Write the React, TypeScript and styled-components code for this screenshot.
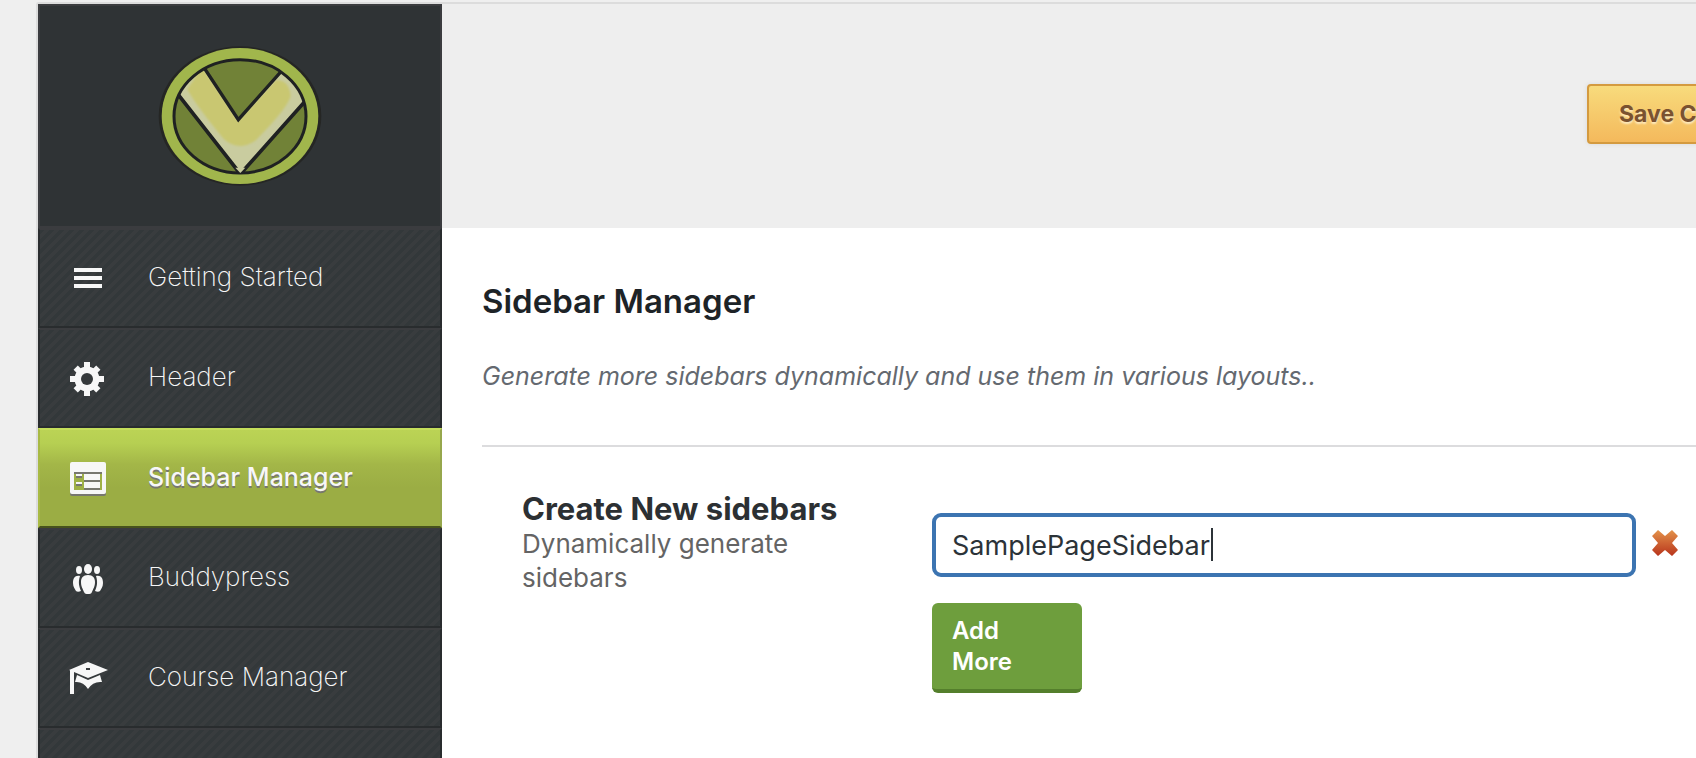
import React, { useState } from "react";
import styled, { createGlobalStyle, css } from "styled-components";

const GlobalStyle = createGlobalStyle`
  * { box-sizing: border-box; }
  body {
    margin: 0;
    background: #efefef;
    font-family: Inter, "Liberation Sans", sans-serif;
    color: #3c434a;
    overflow-x: hidden;
  }
`;

const stripes = css`
  background-color: #373b3d;
  background-image: linear-gradient(
    135deg,
    #33383a 25%,
    #393c3e 25%,
    #393c3e 50%,
    #33383a 50%,
    #33383a 75%,
    #393c3e 75%
  );
  background-size: 10px 10px;
`;

const Page = styled.div`
  min-height: 100vh;
  padding: 2px 0 0 36px;
  display: flex;
`;

const Panel = styled.div`
  flex: 1;
  min-width: 0;
  display: flex;
  border: solid #dcdcdc;
  border-width: 2px 0 0 2px;
  border-top-left-radius: 3px;
`;

const Sidebar = styled.aside`
  flex: 0 0 404px;
  display: flex;
  flex-direction: column;
  background: #2f3335;
`;

const LogoBox = styled.div`
  height: 224px;
  display: flex;
  align-items: center;
  justify-content: center;
  border: 2px solid #3b3c3f;
`;

const Nav = styled.nav`
  flex: 1;
  display: flex;
  flex-direction: column;
`;

const NavLink = styled.a<{ $active?: boolean }>`
  height: 100px;
  display: flex;
  align-items: center;
  gap: 40px;
  padding: 0 28px;
  border: solid #292c2e;
  border-width: 2px;
  border-top-color: #3b3c3f;
  color: #f7f7f7;
  font-size: 26px;
  font-weight: 200;
  line-height: 32px;
  text-decoration: none;
  ${stripes}
  ${(p) =>
    p.$active &&
    css`
      border-color: #c5de5b #96a74c #48531c #a8b944;
      background: linear-gradient(#bbd355, #b6cf52 14%, #a3b648 36%, #9bad44 60%, #9bad44);
      font-size: 25px;
      font-weight: 500;
      text-shadow: 0 2px 0 #77776f;
    `}
`;

const NavLabel = styled.span`
  padding-bottom: 2px;
`;

const NavRest = styled.div`
  flex: 1;
  border: solid #292c2e;
  border-width: 2px 2px 0;
  border-top-color: #3b3c3f;
  ${stripes}
`;

const NavIcon = styled.svg`
  width: 40px;
  height: 40px;
  flex: none;
  fill: #f7f7f7;
`;

const Main = styled.main`
  flex: 1;
  min-width: 0;
  background: #fff;
`;

const TopBar = styled.header`
  height: 224px;
  background: #eee;
  display: flex;
  justify-content: flex-end;
  padding-top: 80px;
  overflow: hidden;
`;

const SaveSlot = styled.div`
  flex: 0 0 109px;
  min-width: 0;
`;

const SaveButton = styled.button`
  height: 60px;
  padding: 0 30px;
  border: 2px solid #d49a3f;
  border-radius: 4px;
  background: linear-gradient(#f8db7c, #f4b95c);
  box-shadow: 0 0 4px #d8d8d8;
  color: #7a5230;
  font: 700 23px/28px Inter, "Liberation Sans", sans-serif;
  text-shadow: 0 2px 2px #fdeac0;
  white-space: nowrap;
`;

const Intro = styled.section`
  margin-left: 40px;
  padding: 52px 0 51px;
  border-bottom: 2px solid #dcdcde;
`;

const Title = styled.h1`
  margin: 0 0 36px;
  color: #1d2327;
  font-size: 33px;
  font-weight: 600;
  line-height: 42px;
`;

const Lead = styled.p`
  margin: 0;
  color: #646970;
  font-size: 25px;
  font-style: italic;
  line-height: 36px;
`;

const Option = styled.section`
  display: grid;
  grid-template-columns: 300px 1fr;
  column-gap: 110px;
  padding: 43px 18px 40px 80px;
`;

const OptionTitle = styled.label`
  display: block;
  color: #2c3033;
  font-size: 31px;
  font-weight: 700;
  line-height: 37px;
  white-space: nowrap;
`;

const OptionHint = styled.p`
  margin: 0;
  color: #646464;
  font-size: 26px;
  line-height: 34px;
`;

const Fields = styled.div`
  padding-top: 23px;
`;

const FieldRow = styled.div`
  display: flex;
  align-items: center;
  gap: 16px;
  margin-bottom: 26px;
`;

const InputWrap = styled.div`
  flex: 1;
  position: relative;
`;

const TextInput = styled.input`
  display: block;
  width: 100%;
  height: 64px;
  padding: 0 16px;
  border: 4px solid #3c74b1;
  border-radius: 9px;
  outline: none;
  background: #fff;
  color: #2c3338;
  font: 400 27px/32px Inter, "Liberation Sans", sans-serif;
`;

const Caret = styled.span`
  position: absolute;
  top: 15px;
  left: 279px;
  width: 2px;
  height: 33px;
  background: #2c3338;
`;

const RemoveButton = styled.button`
  width: 26px;
  height: 30px;
  padding: 0 0 4px;
  border: 0;
  background: none;

  svg {
    display: block;
  }
`;

const AddButton = styled.button`
  width: 150px;
  padding: 12px 60px 12px 20px;
  border: 0;
  border-bottom: 4px solid #547f2c;
  border-radius: 6px;
  background: #6e9e3d;
  color: #fff;
  font: 600 24px/31px Inter, "Liberation Sans", sans-serif;
  text-align: left;
`;

const Logo = () => (
  <svg width="168" height="144" viewBox="468 132 504 432" role="img" aria-label="Logo">
    <defs>
      <clipPath id="disc">
        <ellipse cx="720" cy="349" rx="198" ry="171" />
      </clipPath>
      <filter id="soft">
        <feGaussianBlur stdDeviation="3" />
      </filter>
    </defs>
    <ellipse cx="720" cy="348" rx="244" ry="209" fill="#252624" />
    <ellipse cx="720" cy="348" rx="235" ry="204" fill="#a1b64c" />
    <ellipse cx="720" cy="349" rx="196" ry="169" fill="#718237" />
    <g clipPath="url(#disc)">
      <path d="M510 250L595 177L715 362L875 182L940 274L721 520Z" fill="#c9cc9f" />
      <path
        d="M562 268L606 200L715 362L828 240Q868 240 872 288Q862 326 766 422Q715 456 672 418Q590 320 562 268Z"
        fill="#c9c771"
        filter="url(#soft)"
      />
      <path d="M595 177L715 359L875 179" fill="none" stroke="#1f2122" strokeWidth="10" />
      <path d="M508 250L721 522L942 274" fill="none" stroke="#1f2122" strokeWidth="11" />
    </g>
    <ellipse cx="720" cy="349" rx="198" ry="170" fill="none" stroke="#1f2122" strokeWidth="9" />
    <path d="M706 503L721 519L736 503Z" fill="#c9cc9f" />
  </svg>
);

const icons = {
  bars: <path d="M6 10h28v4H6zM6 18h28v4H6zM6 26h28v4H6z" />,
  gear: (
    <g transform="translate(19 21)">
      {[0, 45, 90, 135].map((a) => (
        <rect key={a} x="-3" y={a % 90 ? -16 : -17} width="6" height={a % 90 ? 32 : 34} transform={`rotate(${a})`} />
      ))}
      <circle r="9" fill="none" stroke="#f7f7f7" strokeWidth="7" />
      <circle r="6" fill="#35393b" />
    </g>
  ),
  layout: (
    <>
      <rect x="2" y="6" width="36" height="32" rx="2" fill="#77776f" />
      <rect x="2" y="4" width="36" height="32" rx="2" />
      <path d="M6 14h28v18H6z" fill="#9fb146" />
      <path d="M6 14h28v2H6zM8 18h6v2H8zM8 26h6v2H8zM16 22h16v2H16zM16 30h16v2H16z" fill="#77776f" />
      <path d="M8 16h6v2H8zM8 24h6v2H8zM16 16h16v6H16zM16 24h16v6H16z" />
    </>
  ),
  group: (
    <>
      <ellipse cx="20" cy="11" rx="4" ry="5" />
      <ellipse cx="11" cy="12" rx="3" ry="4" />
      <ellipse cx="29" cy="12" rx="3" ry="4" />
      <path d="M20 17c5 0 7 3 7 7 0 5-2 7-3 10-1 2-2 2-4 2s-3 0-4-2c-1-3-3-5-3-10 0-4 2-7 7-7z" />
      <path d="M12 18c-5-1-7 2-7 7 0 4 2 6 3 8 1 1 3 1 5 0-2-5-3-9-1-15zM28 18c5-1 7 2 7 7 0 4-2 6-3 8-1 1-3 1-5 0 2-5 3-9 1-15z" />
    </>
  ),
  cap: (
    <>
      <path fillRule="evenodd" d="M20 4L40 12L20 20L6 14L1 12ZM18 10v2h4v-2z" />
      <path d="M2 12h4v24H2zM9 17L20 22L32 17L34 24Q25 23 20 31Q15 23 7 24Z" />
    </>
  ),
};

const items: { icon: keyof typeof icons; label: string; active?: boolean }[] = [
  { icon: "bars", label: "Getting Started" },
  { icon: "gear", label: "Header" },
  { icon: "layout", label: "Sidebar Manager", active: true },
  { icon: "group", label: "Buddypress" },
  { icon: "cap", label: "Course Manager" },
];

export default function App() {
  const [name, setName] = useState("SamplePageSidebar");
  return (
    <Page>
      <GlobalStyle />
      <Panel>
        <Sidebar>
          <LogoBox>
            <Logo />
          </LogoBox>
          <Nav>
            {items.map((item) => (
              <NavLink key={item.label} href="#" $active={item.active}>
                <NavIcon viewBox="0 0 40 40" aria-hidden="true">
                  {icons[item.icon]}
                </NavIcon>
                <NavLabel>{item.label}</NavLabel>
              </NavLink>
            ))}
            <NavRest />
          </Nav>
        </Sidebar>
        <Main>
          <TopBar>
            <SaveSlot>
              <SaveButton type="button">Save Changes</SaveButton>
            </SaveSlot>
          </TopBar>
          <Intro>
            <Title>Sidebar Manager</Title>
            <Lead>Generate more sidebars dynamically and use them in various layouts..</Lead>
          </Intro>
          <Option>
            <div>
              <OptionTitle htmlFor="sidebar-name">Create New sidebars</OptionTitle>
              <OptionHint>Dynamically generate sidebars</OptionHint>
            </div>
            <Fields>
              <FieldRow>
                <InputWrap>
                  <TextInput id="sidebar-name" type="text" value={name} onChange={(e) => setName(e.target.value)} />
                  <Caret />
                </InputWrap>
                <RemoveButton type="button" aria-label="Remove sidebar">
                  <svg width="26" height="26" viewBox="0 0 26 26">
                    <defs>
                      <linearGradient id="cross" x1="0" y1="0" x2="0" y2="1">
                        <stop offset="0" stopColor="#e3924a" />
                        <stop offset="1" stopColor="#b8341c" />
                      </linearGradient>
                    </defs>
                    <path
                      d="M6 0L13 6L20 0L26 6L20 13L26 20L20 26L13 20L6 26L0 20L6 13L0 6Z"
                      fill="url(#cross)"
                    />
                  </svg>
                </RemoveButton>
              </FieldRow>
              <AddButton type="button">Add More</AddButton>
            </Fields>
          </Option>
        </Main>
      </Panel>
    </Page>
  );
}
